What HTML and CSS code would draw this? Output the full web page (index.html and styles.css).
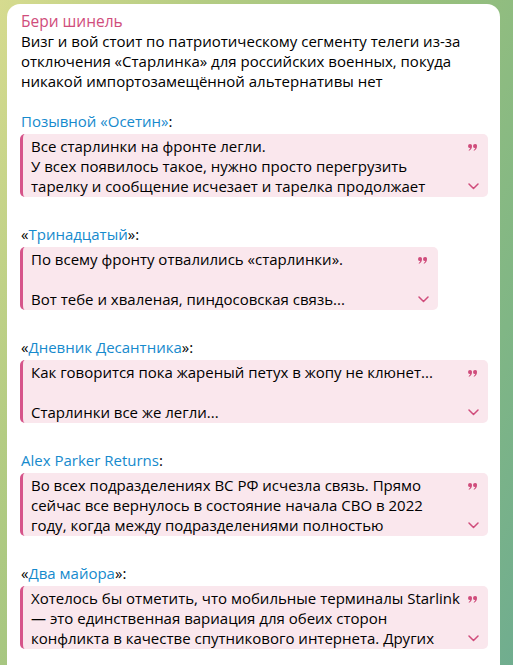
FILE: index.html
```html
<!DOCTYPE html>
<html lang="ru">
<head>
<meta charset="utf-8">
<title>Бери шинель</title>
<link rel="stylesheet" href="styles.css">
</head>
<body>
<div class="chat">
  <div class="bubble">
    <div class="author">Бери шинель</div>
    <div class="text">
      <div class="ln">Визг и вой стоит по патриотическому сегменту телеги из-за</div>
      <div class="ln">отключения «Старлинка» для российских военных, покуда</div>
      <div class="ln">никакой импортозамещённой альтернативы нет</div>
    </div>
    <div class="blank"></div>

    <div class="ln"><a class="link">Позывной «Осетин»</a>:</div>
    <div class="quote">
      <div class="ln">Все старлинки на фронте легли.</div>
      <div class="ln">У всех появилось такое, нужно просто перегрузить</div>
      <div class="ln">тарелку и сообщение исчезает и тарелка продолжает</div>
      <svg class="qicon" width="9" height="7" viewBox="0 0 9 7"><path d="M2 0a2 2 0 0 1 2 2.2c0 2-1.2 3.8-3 4.6l-.4-.6c1-.6 1.5-1.4 1.6-2.1A2 2 0 0 1 2 0zM7 0a2 2 0 0 1 2 2.2c0 2-1.2 3.8-3 4.6l-.4-.6c1-.6 1.5-1.4 1.6-2.1A2 2 0 0 1 7 0z"/></svg>
      <svg class="qchev" width="11" height="7" viewBox="0 0 11 7"><path d="M1 1l4.5 4.5L10 1"/></svg>
    </div>
    <div class="blank"></div>

    <div class="ln">«<a class="link">Тринадцатый</a>»:</div>
    <div class="quote narrow">
      <div class="ln">По всему фронту отвалились «старлинки».</div>
      <div class="ln">&nbsp;</div>
      <div class="ln">Вот тебе и хваленая, пиндосовская связь...</div>
      <svg class="qicon" width="9" height="7" viewBox="0 0 9 7"><path d="M2 0a2 2 0 0 1 2 2.2c0 2-1.2 3.8-3 4.6l-.4-.6c1-.6 1.5-1.4 1.6-2.1A2 2 0 0 1 2 0zM7 0a2 2 0 0 1 2 2.2c0 2-1.2 3.8-3 4.6l-.4-.6c1-.6 1.5-1.4 1.6-2.1A2 2 0 0 1 7 0z"/></svg>
      <svg class="qchev" width="11" height="7" viewBox="0 0 11 7"><path d="M1 1l4.5 4.5L10 1"/></svg>
    </div>
    <div class="blank"></div>

    <div class="ln">«<a class="link">Дневник Десантника</a>»:</div>
    <div class="quote">
      <div class="ln">Как говорится пока жареный петух в жопу не клюнет...</div>
      <div class="ln">&nbsp;</div>
      <div class="ln">Старлинки все же легли...</div>
      <svg class="qicon" width="9" height="7" viewBox="0 0 9 7"><path d="M2 0a2 2 0 0 1 2 2.2c0 2-1.2 3.8-3 4.6l-.4-.6c1-.6 1.5-1.4 1.6-2.1A2 2 0 0 1 2 0zM7 0a2 2 0 0 1 2 2.2c0 2-1.2 3.8-3 4.6l-.4-.6c1-.6 1.5-1.4 1.6-2.1A2 2 0 0 1 7 0z"/></svg>
      <svg class="qchev" width="11" height="7" viewBox="0 0 11 7"><path d="M1 1l4.5 4.5L10 1"/></svg>
    </div>
    <div class="blank"></div>

    <div class="ln"><a class="link">Alex Parker Returns</a>:</div>
    <div class="quote">
      <div class="ln">Во всех подразделениях ВС РФ исчезла связь. Прямо</div>
      <div class="ln">сейчас все вернулось в состояние начала СВО в 2022</div>
      <div class="ln">году, когда между подразделениями полностью</div>
      <svg class="qicon" width="9" height="7" viewBox="0 0 9 7"><path d="M2 0a2 2 0 0 1 2 2.2c0 2-1.2 3.8-3 4.6l-.4-.6c1-.6 1.5-1.4 1.6-2.1A2 2 0 0 1 2 0zM7 0a2 2 0 0 1 2 2.2c0 2-1.2 3.8-3 4.6l-.4-.6c1-.6 1.5-1.4 1.6-2.1A2 2 0 0 1 7 0z"/></svg>
      <svg class="qchev" width="11" height="7" viewBox="0 0 11 7"><path d="M1 1l4.5 4.5L10 1"/></svg>
    </div>
    <div class="blank"></div>

    <div class="ln">«<a class="link">Два майора</a>»:</div>
    <div class="quote">
      <div class="ln">Хотелось бы отметить, что мобильные терминалы Starlink</div>
      <div class="ln">— это единственная вариация для обеих сторон</div>
      <div class="ln">конфликта в качестве спутникового интернета. Других</div>
      <svg class="qicon" width="9" height="7" viewBox="0 0 9 7"><path d="M2 0a2 2 0 0 1 2 2.2c0 2-1.2 3.8-3 4.6l-.4-.6c1-.6 1.5-1.4 1.6-2.1A2 2 0 0 1 2 0zM7 0a2 2 0 0 1 2 2.2c0 2-1.2 3.8-3 4.6l-.4-.6c1-.6 1.5-1.4 1.6-2.1A2 2 0 0 1 7 0z"/></svg>
      <svg class="qchev" width="11" height="7" viewBox="0 0 11 7"><path d="M1 1l4.5 4.5L10 1"/></svg>
    </div>
    <div class="blank"></div>
    <div class="blank"></div>
  </div>
</div>
</body>
</html>
```

FILE: styles.css
```css
html, body {
  margin: 0;
  padding: 0;
  height: 100%;
  overflow: hidden;
}

body {
  background: linear-gradient(115deg, #d6db8f 0%, #b4cc83 25%, #96bf7e 55%, #80b685 80%, #70ad8f 100%);
  font-family: "Open Sans", "DejaVu Sans", sans-serif;
  font-size: 15px;
  line-height: 20px;
  color: #000;
}

.chat {
  padding: 4px 13px 0 7px;
}

.bubble {
  background: #fff;
  border-radius: 13px 13px 0 0;
  padding: 7px 12px 0 14px;
}

.author {
  color: #d04d7c;
  font-size: 15.5px;
}

.ln {
  white-space: nowrap;
}

.blank {
  height: 20px;
}

.link {
  color: #168acd;
  text-decoration: none;
}

.quote {
  position: relative;
  margin: 3px 0 7px -1px;
  background: #fae7ed;
  border-left: 3px solid #d6548a;
  border-radius: 5px;
  padding: 2px 22px 1px 8px;
  overflow: hidden;
}

.quote.narrow {
  width: 385px;
}

.qicon {
  position: absolute;
  top: 10px;
  right: 11px;
  fill: #d04d7c;
}

.qchev {
  position: absolute;
  bottom: 7px;
  right: 9px;
  fill: none;
  stroke: #d04d7c;
  stroke-width: 1.5;
  stroke-linecap: round;
  stroke-linejoin: round;
}
```
